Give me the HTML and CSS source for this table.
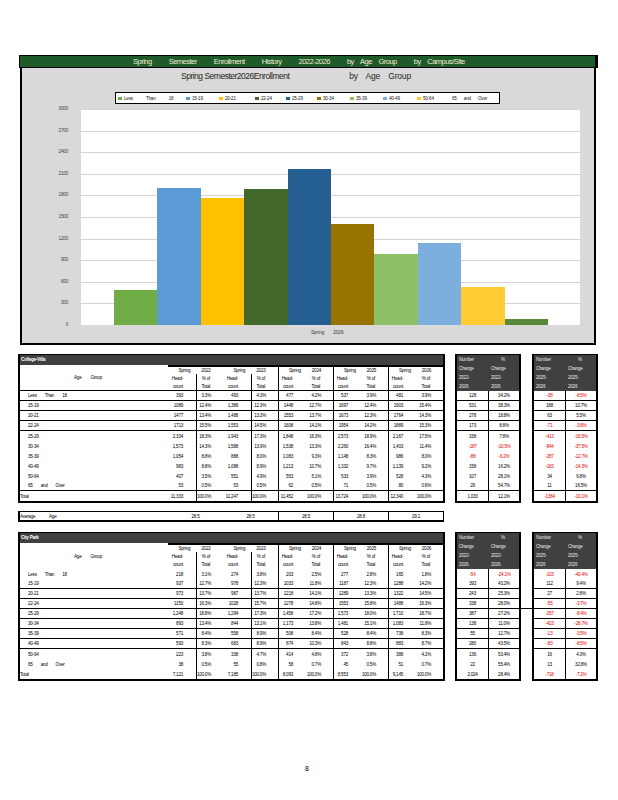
FILE: index.html
```html
<!DOCTYPE html>
<html lang="en">
<head>
<meta charset="utf-8">
<title>Spring Semester Enrollment History</title>
<link rel="stylesheet" href="styles.css">
</head>
<body>
<div class="page">
  <div class="banner">
    <span>Spring</span><span>Semester</span><span>Enrollment</span><span>History</span><span>2022-2026</span><span class="w">by Age Group</span><span class="w">by Campus/Site</span>
  </div>

  <div class="chart">
    <div class="chart-title"><span>Spring Semester2026Enrollment</span><span class="t2">by Age Group</span></div>
    <div class="legend">
      <div class="li first"><i class="c1"></i><span class="ws">Less Than 18</span></div>
      <div class="li"><i class="c2"></i>15-19</div>
      <div class="li w36"><i class="c3"></i>20-21</div>
      <div class="li w31"><i class="c4"></i>22-24</div>
      <div class="li w31"><i class="c5"></i>25-29</div>
      <div class="li"><i class="c6"></i>30-34</div>
      <div class="li"><i class="c7"></i>35-39</div>
      <div class="li w34"><i class="c8"></i>40-49</div>
      <div class="li"><i class="c9"></i>50-64</div>
      <div class="li"><i class="c10"></i><span class="ws2">65 and Over</span></div>
    </div>
    <div class="plot-wrap">
      <div class="yaxis">
        <span>3000</span><span>2700</span><span>2400</span><span>2100</span><span>1800</span><span>1500</span><span>1200</span><span>900</span><span>600</span><span>300</span><span>0</span>
      </div>
      <div class="plot">
        <div class="bar c1" style="height:34.6px"></div>
        <div class="bar c2" style="height:137.0px"></div>
        <div class="bar c3" style="height:127.0px"></div>
        <div class="bar c4" style="height:136.0px"></div>
        <div class="bar c5" style="height:156.0px"></div>
        <div class="bar c6" style="height:101.0px"></div>
        <div class="bar c7" style="height:71.0px"></div>
        <div class="bar c8" style="height:82.0px"></div>
        <div class="bar c9" style="height:38.0px"></div>
        <div class="bar c10" style="height:5.8px"></div>
      </div>
    </div>
    <div class="xlabel">Spring&nbsp;&nbsp;&nbsp;&nbsp;&nbsp;&nbsp;&nbsp;2026</div>
  </div>

  <!-- College-Villa -->
  <div class="block">
    <div class="tbl">
      <div class="tbl-title">College-Villa</div>
      <div class="thead ln">
        <div class="agegrp">Age Group</div>
        <div class="yr">Spring 2022</div>
        <div class="yr">Spring 2023</div>
        <div class="yr vl">Spring 2024</div>
        <div class="yr vl">Spring 2025</div>
        <div class="yr vl">Spring 2026</div>
        <div class="hn">Head-</div><div class="hp vl">% of</div>
        <div class="hn">Head-</div><div class="hp vl">% of</div>
        <div class="hn vl">Head-</div><div class="hp">% of</div>
        <div class="hn vl">Head-</div><div class="hp">% of</div>
        <div class="hn vl">Head-</div><div class="hp">% of</div>
        <div class="hn">count</div><div class="hp vl">Total</div>
        <div class="hn">count</div><div class="hp vl">Total</div>
        <div class="hn vl">count</div><div class="hp">Total</div>
        <div class="hn vl">count</div><div class="hp">Total</div>
        <div class="hn vl">count</div><div class="hp">Total</div>
      </div>
      <div class="r ln"><div class="lbl">Less Than 18</div><div class="n">393</div><div class="p vl">3.3%</div><div class="n">493</div><div class="p vl">4.3%</div><div class="n vl">477</div><div class="p">4.2%</div><div class="n vl">537</div><div class="p">3.9%</div><div class="n vl">481</div><div class="p">3.9%</div></div>
      <div class="r ln"><div class="lbl">15-19</div><div class="n">1089</div><div class="p vl">12.4%</div><div class="n">1,389</div><div class="p vl">12.3%</div><div class="n vl">1448</div><div class="p">12.7%</div><div class="n vl">1697</div><div class="p">12.4%</div><div class="n vl">1903</div><div class="p">15.4%</div></div>
      <div class="r ln"><div class="lbl">20-21</div><div class="n">1477</div><div class="p vl">13.4%</div><div class="n">1,488</div><div class="p vl">13.3%</div><div class="n vl">1553</div><div class="p">13.7%</div><div class="n vl">1673</div><div class="p">12.3%</div><div class="n vl">1764</div><div class="p">14.3%</div></div>
      <div class="r ln"><div class="lbl">22-24</div><div class="n">1713</div><div class="p vl">15.5%</div><div class="n">1,553</div><div class="p vl">14.5%</div><div class="n vl">1608</div><div class="p">14.1%</div><div class="n vl">1954</div><div class="p">14.2%</div><div class="n vl">1889</div><div class="p">15.3%</div></div>
      <div class="r"><div class="lbl">25-29</div><div class="n">2,334</div><div class="p vl">18.3%</div><div class="n">1,943</div><div class="p vl">17.3%</div><div class="n vl">1,848</div><div class="p">16.3%</div><div class="n vl">2,573</div><div class="p">18.9%</div><div class="n vl">2,167</div><div class="p">17.5%</div></div>
      <div class="r"><div class="lbl">30-34</div><div class="n">1,573</div><div class="p vl">14.3%</div><div class="n">1,588</div><div class="p vl">13.9%</div><div class="n vl">1,538</div><div class="p">13.3%</div><div class="n vl">2,260</div><div class="p">16.4%</div><div class="n vl">1,403</div><div class="p">11.4%</div></div>
      <div class="r"><div class="lbl">35-39</div><div class="n">1,054</div><div class="p vl">8.8%</div><div class="n">888</div><div class="p vl">8.0%</div><div class="n vl">1,083</div><div class="p">9.3%</div><div class="n vl">1,148</div><div class="p">8.3%</div><div class="n vl">986</div><div class="p">8.0%</div></div>
      <div class="r"><div class="lbl">40-49</div><div class="n">983</div><div class="p vl">8.8%</div><div class="n">1,088</div><div class="p vl">8.9%</div><div class="n vl">1,213</div><div class="p">10.7%</div><div class="n vl">1,332</div><div class="p">9.7%</div><div class="n vl">1,139</div><div class="p">9.2%</div></div>
      <div class="r"><div class="lbl">50-64</div><div class="n">407</div><div class="p vl">3.5%</div><div class="n">551</div><div class="p vl">4.9%</div><div class="n vl">553</div><div class="p">5.1%</div><div class="n vl">533</div><div class="p">3.9%</div><div class="n vl">528</div><div class="p">4.3%</div></div>
      <div class="r ln"><div class="lbl ws2">65 and Over</div><div class="n">53</div><div class="p vl">0.5%</div><div class="n">53</div><div class="p vl">0.5%</div><div class="n vl">62</div><div class="p">0.5%</div><div class="n vl">71</div><div class="p">0.5%</div><div class="n vl">80</div><div class="p">0.6%</div></div>
      <div class="r"><div class="lbl tot">Total</div><div class="n">11,333</div><div class="p vl">100.0%</div><div class="n">11,247</div><div class="p vl">100.0%</div><div class="n vl">11,452</div><div class="p">100.0%</div><div class="n vl">13,724</div><div class="p">100.0%</div><div class="n vl">12,340</div><div class="p">100.0%</div></div>
    </div>

    <div class="side sa">
      <div class="side-head"><span>Number</span><span class="pc">%</span><span>Change</span><span>Change</span><span>2022-</span><span>2022-</span><span>2026</span><span>2026</span></div>
      <div class="sr ln"><div>128</div><div>34.2%</div></div>
      <div class="sr ln"><div>531</div><div>38.3%</div></div>
      <div class="sr ln"><div>278</div><div>18.8%</div></div>
      <div class="sr ln"><div>173</div><div>8.8%</div></div>
      <div class="sr"><div>158</div><div>7.8%</div></div>
      <div class="sr"><div class="neg">-187</div><div class="neg">-10.5%</div></div>
      <div class="sr"><div class="neg">-88</div><div class="neg">-6.2%</div></div>
      <div class="sr"><div>158</div><div>16.2%</div></div>
      <div class="sr"><div>107</div><div>28.1%</div></div>
      <div class="sr ln"><div>29</div><div>54.7%</div></div>
      <div class="sr"><div>1,033</div><div>12.1%</div></div>
    </div>

    <div class="side sb">
      <div class="side-head"><span>Number</span><span class="pc">%</span><span>Change</span><span>Change</span><span>2025-</span><span>2025-</span><span>2026</span><span>2026</span></div>
      <div class="sr ln"><div class="neg">-38</div><div class="neg">-8.5%</div></div>
      <div class="sr ln"><div>188</div><div>10.7%</div></div>
      <div class="sr ln"><div>63</div><div>5.5%</div></div>
      <div class="sr ln"><div class="neg">-71</div><div class="neg">-3.8%</div></div>
      <div class="sr"><div class="neg">-413</div><div class="neg">-16.5%</div></div>
      <div class="sr"><div class="neg">-844</div><div class="neg">-37.5%</div></div>
      <div class="sr"><div class="neg">-287</div><div class="neg">-12.7%</div></div>
      <div class="sr"><div class="neg">-183</div><div class="neg">-14.3%</div></div>
      <div class="sr"><div>34</div><div>6.8%</div></div>
      <div class="sr ln"><div>11</div><div>16.5%</div></div>
      <div class="sr"><div class="neg">-1384</div><div class="neg">-10.1%</div></div>
    </div>
  </div>

  <div class="avg">
    <div class="albl">Average Age</div>
    <div>28.5</div><div>28.5</div><div class="vl">28.5</div><div class="vl">28.8</div><div class="vl">29.1</div>
  </div>

  <!-- City Park -->
  <div class="block b2">
    <div class="tbl">
      <div class="tbl-title">City Park</div>
      <div class="thead">
        <div class="agegrp">Age Group</div>
        <div class="yr">Spring 2022</div>
        <div class="yr">Spring 2023</div>
        <div class="yr vl">Spring 2024</div>
        <div class="yr vl">Spring 2025</div>
        <div class="yr vl">Spring 2026</div>
        <div class="hn">Head-</div><div class="hp vl">% of</div>
        <div class="hn">Head-</div><div class="hp vl">% of</div>
        <div class="hn vl">Head-</div><div class="hp">% of</div>
        <div class="hn vl">Head-</div><div class="hp">% of</div>
        <div class="hn vl">Head-</div><div class="hp">% of</div>
        <div class="hn">count</div><div class="hp vl">Total</div>
        <div class="hn">count</div><div class="hp vl">Total</div>
        <div class="hn vl">count</div><div class="hp">Total</div>
        <div class="hn vl">count</div><div class="hp">Total</div>
        <div class="hn vl">count</div><div class="hp">Total</div>
      </div>
      <div class="r"><div class="lbl">Less Than 18</div><div class="n">218</div><div class="p vl">3.1%</div><div class="n">274</div><div class="p vl">3.8%</div><div class="n vl">203</div><div class="p">2.5%</div><div class="n vl">277</div><div class="p">2.8%</div><div class="n vl">165</div><div class="p">1.8%</div></div>
      <div class="r ln"><div class="lbl">15-19</div><div class="n">937</div><div class="p vl">12.7%</div><div class="n">978</div><div class="p vl">12.3%</div><div class="n vl">1033</div><div class="p">11.8%</div><div class="n vl">1187</div><div class="p">12.3%</div><div class="n vl">1288</div><div class="p">14.2%</div></div>
      <div class="r ln"><div class="lbl">20-21</div><div class="n">973</div><div class="p vl">13.7%</div><div class="n">987</div><div class="p vl">13.7%</div><div class="n vl">1218</div><div class="p">14.1%</div><div class="n vl">1289</div><div class="p">13.3%</div><div class="n vl">1322</div><div class="p">14.5%</div></div>
      <div class="r ln"><div class="lbl">22-24</div><div class="n">1150</div><div class="p vl">16.3%</div><div class="n">1028</div><div class="p vl">15.7%</div><div class="n vl">1278</div><div class="p">14.8%</div><div class="n vl">1553</div><div class="p">15.8%</div><div class="n vl">1488</div><div class="p">16.3%</div></div>
      <div class="r ln"><div class="lbl">25-29</div><div class="n">1,248</div><div class="p vl">18.8%</div><div class="n">1,294</div><div class="p vl">17.3%</div><div class="n vl">1,458</div><div class="p">17.2%</div><div class="n vl">1,573</div><div class="p">18.0%</div><div class="n vl">1,710</div><div class="p">18.7%</div></div>
      <div class="r ln"><div class="lbl">30-34</div><div class="n">893</div><div class="p vl">13.4%</div><div class="n">844</div><div class="p vl">13.1%</div><div class="n vl">1,173</div><div class="p">13.8%</div><div class="n vl">1,481</div><div class="p">15.1%</div><div class="n vl">1,083</div><div class="p">11.8%</div></div>
      <div class="r ln"><div class="lbl">35-39</div><div class="n">571</div><div class="p vl">8.4%</div><div class="n">558</div><div class="p vl">8.9%</div><div class="n vl">508</div><div class="p">8.4%</div><div class="n vl">528</div><div class="p">8.4%</div><div class="n vl">738</div><div class="p">8.3%</div></div>
      <div class="r ln"><div class="lbl">40-49</div><div class="n">593</div><div class="p vl">8.3%</div><div class="n">683</div><div class="p vl">8.9%</div><div class="n vl">874</div><div class="p">10.3%</div><div class="n vl">843</div><div class="p">8.8%</div><div class="n vl">883</div><div class="p">8.7%</div></div>
      <div class="r"><div class="lbl">50-64</div><div class="n">223</div><div class="p vl">3.8%</div><div class="n">338</div><div class="p vl">4.7%</div><div class="n vl">414</div><div class="p">4.8%</div><div class="n vl">372</div><div class="p">3.8%</div><div class="n vl">388</div><div class="p">4.2%</div></div>
      <div class="r"><div class="lbl ws2">65 and Over</div><div class="n">38</div><div class="p vl">0.5%</div><div class="n">55</div><div class="p vl">0.8%</div><div class="n vl">58</div><div class="p">0.7%</div><div class="n vl">45</div><div class="p">0.5%</div><div class="n vl">51</div><div class="p">0.7%</div></div>
      <div class="r"><div class="lbl tot">Total</div><div class="n">7,121</div><div class="p vl">100.0%</div><div class="n">7,185</div><div class="p vl">100.0%</div><div class="n vl">8,093</div><div class="p">100.0%</div><div class="n vl">8,553</div><div class="p">100.0%</div><div class="n vl">9,145</div><div class="p">100.0%</div></div>
    </div>

    <div class="side sa">
      <div class="side-head"><span>Number</span><span class="pc">%</span><span>Change</span><span>Change</span><span>2022-</span><span>2022-</span><span>2026</span><span>2026</span></div>
      <div class="sr"><div class="neg">-54</div><div class="neg">-24.1%</div></div>
      <div class="sr ln"><div>393</div><div>43.2%</div></div>
      <div class="sr ln"><div>243</div><div>25.3%</div></div>
      <div class="sr ln"><div>338</div><div>28.0%</div></div>
      <div class="sr ln"><div>387</div><div>27.2%</div></div>
      <div class="sr ln"><div>138</div><div>11.0%</div></div>
      <div class="sr ln"><div>55</div><div>12.7%</div></div>
      <div class="sr ln"><div>280</div><div>43.5%</div></div>
      <div class="sr"><div>136</div><div>53.4%</div></div>
      <div class="sr"><div>22</div><div>55.4%</div></div>
      <div class="sr"><div>2,024</div><div>28.4%</div></div>
    </div>

    <div class="connector"></div>

    <div class="side sb2">
      <div class="side-head"><span>Number</span><span class="pc">%</span><span>Change</span><span>Change</span><span>2025-</span><span>2025-</span><span>2026</span><span>2026</span></div>
      <div class="sr"><div class="neg">-103</div><div class="neg">-40.4%</div></div>
      <div class="sr ln"><div>112</div><div>9.4%</div></div>
      <div class="sr ln"><div>27</div><div>2.8%</div></div>
      <div class="sr ln"><div class="neg">-55</div><div class="neg">-3.7%</div></div>
      <div class="sr ln"><div class="neg">-267</div><div class="neg">-8.4%</div></div>
      <div class="sr ln"><div class="neg">-423</div><div class="neg">-28.7%</div></div>
      <div class="sr ln"><div class="neg">-13</div><div class="neg">-3.5%</div></div>
      <div class="sr ln"><div class="neg">-83</div><div class="neg">-8.5%</div></div>
      <div class="sr"><div>16</div><div>4.3%</div></div>
      <div class="sr"><div>13</div><div>32.8%</div></div>
      <div class="sr"><div class="neg">-718</div><div class="neg">-7.2%</div></div>
    </div>
  </div>

  <div class="pagenum">8</div>
</div>
</body>
</html>
```

FILE: styles.css
```css
* { box-sizing: border-box; }
body {
  margin: 0;
  background: #fff;
  font-family: "Liberation Sans", Arial, sans-serif;
  color: #000;
}
.page {
  width: 618px;
  height: 800px;
  padding-top: 55px;
  overflow: hidden;
}

/* Banner */
.banner {
  margin-left: 19px;
  width: 579px;
  height: 13px;
  background: #1f5a2b;
  border: 1px solid #000;
  border-right-width: 3px;
  display: flex;
  align-items: center;
  padding-left: 113px;
  gap: 17px;
  color: #f1eed0;
  font-size: 7.5px;
  letter-spacing: -0.5px;
  white-space: nowrap;
}
.banner .w { word-spacing: 5px; }

/* Chart */
.chart {
  margin-left: 20px;
  width: 576px;
  height: 277px;
  border: 2px solid #000;
  border-top: 0;
  background: #d9d9d9;
  display: flex;
  flex-direction: column;
}
.chart-title {
  height: 16px;
  display: flex;
  align-items: center;
  padding-left: 159px;
  font-size: 8.5px;
  letter-spacing: -0.5px;
  color: #2b2520;
  white-space: nowrap;
}
.chart-title .t2 { margin-left: 60px; word-spacing: 6px; letter-spacing: -0.2px; }
.legend {
  margin: 8px 0 0 93px;
  width: 385px;
  height: 12px;
  background: #fff;
  border: 1px solid #000;
  display: flex;
  align-items: center;
  padding-left: 2px;
  font-size: 4.6px;
  letter-spacing: -0.2px;
  color: #222;
  white-space: nowrap;
}
.li { width: 33px; display: flex; align-items: center; gap: 2px; }
.li.first { width: 68px; }
.li.w36 { width: 36px; }
.li.w31 { width: 31px; }
.li.w34 { width: 34px; }
.li i { display: block; width: 4px; height: 3px; }
.ws { word-spacing: 12px; }
.ws2 { word-spacing: 6px; }

.plot-wrap {
  margin-top: 5px;
  display: grid;
  grid-template-columns: 59px 499px;
  height: 216px;
}
.yaxis {
  align-self: start;
  height: 222px;
  margin: -3px 0;
  padding-right: 13px;
  display: flex;
  flex-direction: column;
  justify-content: space-between;
  align-items: flex-end;
  font-size: 4.6px;
  letter-spacing: -0.2px;
  line-height: 6px;
  color: #404040;
}
.plot {
  background: repeating-linear-gradient(to bottom, #d4d4d4 0, #d4d4d4 1px, transparent 1px, transparent 21.6px), #fff;
  display: flex;
  align-items: flex-end;
  padding: 0 32px 0 33px;
}
.bar { flex: 1; }
.c1 { background: #70ad47; }
.c2 { background: #5b9bd5; }
.c3 { background: #ffc000; }
.c4 { background: #43682b; }
.c5 { background: #255e91; }
.c6 { background: #997300; }
.c7 { background: #8cc168; }
.c8 { background: #7cafdd; }
.c9 { background: #ffcd33; }
.c10 { background: #568a3a; }
.xlabel {
  margin-top: 4px;
  padding-left: 289px;
  font-size: 4.6px;
  line-height: 8px;
  color: #333;
}

/* Tables */
.block {
  display: flex;
  align-items: flex-start;
  margin-top: 9px;
  padding-left: 18px;
  font-size: 4.6px;
  letter-spacing: -0.25px;
}
.block.b2 { margin-top: 10px; }
.tbl {
  --cols: 148px 28px 27px 28px 27px 28px 27px 28px 27px 28px 27px;
  width: 427px;
  border: 2px solid #000;
  border-top-width: 1px;
}
.tbl-title {
  height: 10px;
  line-height: 10px;
  background: #404040;
  color: #fff;
  font-weight: bold;
  padding-left: 1px;
}
.thead {
  display: grid;
  grid-template-columns: var(--cols);
  grid-template-rows: 9px 8px 1fr;
  height: 26px;
}
.thead.ln { border-bottom: 1px solid #000; }
.thead > div { display: flex; align-items: center; white-space: nowrap; }
.agegrp {
  grid-row: 1 / span 3;
  grid-column: 1;
  justify-content: center;
  padding-right: 12px;
  word-spacing: 8px;
}
.yr {
  grid-column: span 2;
  border-top: 2px solid #000;
  justify-content: center;
  word-spacing: 10px;
  padding-right: 2px;
}
.hn, .hp { justify-content: flex-end; padding-right: 13px; }
.hp { padding-right: 13px; }
.vl { border-left: 1px solid #000; }

.r {
  display: grid;
  grid-template-columns: var(--cols);
  height: 10px;
}
.r.ln, .sr.ln { border-bottom: 1px solid #000; }
.r > div { display: flex; align-items: center; white-space: nowrap; }
.lbl { padding-left: 8px; word-spacing: 7px; }
.lbl.tot { padding-left: 0; }
.n { justify-content: flex-end; padding-right: 13px; }
.p { justify-content: flex-end; padding-right: 12px; }

.side {
  width: 66px;
  border: 2px solid #000;
  border-top-width: 1px;
}
.sa { margin-left: 10px; }
.sb { margin-left: 11px; }
.sb2 { margin-left: 0; }
.connector {
  width: 11px;
  height: 1px;
  margin-top: 76px;
  background: #000;
}
.side-head {
  height: 36px;
  background: #404040;
  color: #e4e6ea;
  display: grid;
  grid-template-columns: 31px 31px;
  grid-template-rows: repeat(4, 9px);
  align-items: center;
}
.side-head span { padding-left: 2px; }
.side-head span:nth-child(even) { padding-left: 3px; }
.side-head .pc { padding-left: 13px !important; }
.sr {
  display: grid;
  grid-template-columns: 31px 31px;
  height: 10px;
}
.sr > div { display: flex; align-items: center; justify-content: center; white-space: nowrap; }
.sr > div + div { border-left: 1px solid #000; }
.neg { color: #e60000; }

.avg {
  margin: 8px 0 0 18px;
  width: 426px;
  height: 11px;
  border: 1px solid #000;
  border-left-width: 2px;
  border-bottom-width: 2px;
  display: grid;
  grid-template-columns: 148px repeat(5, 55px);
  font-size: 4.6px;
  letter-spacing: -0.25px;
}
.avg > div { display: flex; align-items: center; justify-content: center; }
.avg > .albl { justify-content: flex-start; word-spacing: 13px; }

.pagenum {
  margin-top: 84px;
  text-align: center;
  padding-right: 4px;
  font-size: 7px;
}
```
